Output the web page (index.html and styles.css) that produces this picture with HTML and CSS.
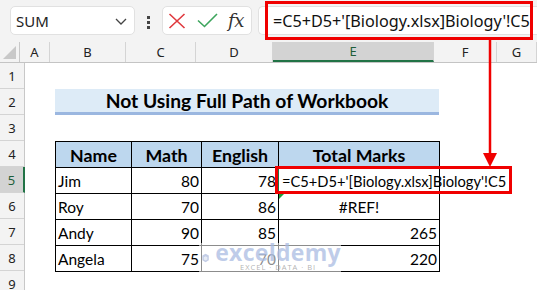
FILE: index.html
```html
<!DOCTYPE html>
<html>
<head>
<meta charset="utf-8">
<link rel="stylesheet" href="styles.css">
</head>
<body>
<div class="app">
  <div class="fbar">
    <div class="namebox"><span>SUM</span>
      <svg class="chev" width="12" height="7" viewBox="0 0 12 7"><path d="M1 1 L6 6 L11 1" fill="none" stroke="#444" stroke-width="1.3"/></svg>
    </div>
    <div class="dots"><i></i><i></i><i></i></div>
    <div class="fxbox">
      <svg class="ic" width="18" height="16" viewBox="0 0 18 16"><path d="M1.5 1 L16.5 15 M16.5 1 L1.5 15" stroke="#e0393e" stroke-width="1.6" fill="none"/></svg>
      <svg class="ic" width="21" height="15" viewBox="0 0 21 15"><path d="M1 7.5 L7.5 13.5 L20 1" stroke="#3da55d" stroke-width="1.6" fill="none"/></svg>
      <span class="fx">fx</span>
    </div>
    <div class="finput">=C5+D5+'[Biology.xlsx]Biology'!C5</div>
  </div>
  <div class="colheads">
    <div class="corner"><svg width="13" height="13" viewBox="0 0 13 13"><path d="M13 0 L13 13 L0 13 Z" fill="#c8c8c8"/></svg></div>
    <div class="ch wA">A</div>
    <div class="ch wB">B</div>
    <div class="ch wC">C</div>
    <div class="ch wD">D</div>
    <div class="ch wE sel">E</div>
    <div class="ch wF">F</div>
    <div class="ch wG">G</div>
  </div>
  <div class="body">
    <div class="rowheads">
      <div class="rh">1</div><div class="rh">2</div><div class="rh">3</div><div class="rh">4</div>
      <div class="rh sel">5</div><div class="rh">6</div><div class="rh">7</div><div class="rh">8</div><div class="rh">9</div>
    </div>
    <div class="sheet">
      <div class="spacer"></div>
      <div class="title">Not Using Full Path of Workbook</div>
      <div class="spacer"></div>
      <div class="tbl">
        <div class="th">Name</div><div class="th">Math</div><div class="th">English</div><div class="th">Total Marks</div>
        <div class="td">Jim</div><div class="td num">80</div><div class="td num">78</div><div class="td active"><span class="ftext">=C5+D5+'[Biology.xlsx]Biology'!C5</span></div>
        <div class="td">Roy</div><div class="td num">70</div><div class="td num">86</div><div class="td ctr err">#REF!</div>
        <div class="td">Andy</div><div class="td num">90</div><div class="td num">85</div><div class="td num">265</div>
        <div class="td">Angela</div><div class="td num">75</div><div class="td num">70</div><div class="td num">220</div>
      </div>
    </div>
  </div>

  <div class="redbox-bar"></div>
  <svg class="arrow" width="20" height="130" viewBox="0 0 20 130"><path d="M10 0 L10 114" stroke="#f00000" stroke-width="2.5"/><path d="M3 113 L17 113 L10 127 Z" fill="#f00000"/></svg>
  <div class="redbox-cell"></div>
  <div class="watermark">
    <svg class="wm-logo" width="20" height="26" viewBox="0 0 20 26"><path d="M10 1 L19 6 L19 19 L10 25 L1 19 L1 6 Z" fill="#c3cde6"/><path d="M10 8 L15 11 L15 17 L10 20 L5 17 L5 11 Z" fill="#e6ebf5"/></svg>
    <div class="wm-text"><div class="wm-big">exceldemy</div><div class="wm-small">EXCEL · DATA · BI</div></div>
  </div>
</div>
</body>
</html>
```
FILE: styles.css
```css
html, body { margin: 0; padding: 0; }
body { width: 537px; height: 290px; overflow: hidden; background: #fff; }
.app { position: relative; width: 537px; height: 290px; overflow: hidden; font-family: "Noto Sans", sans-serif; }

.fbar { height: 42px; background: #f3f3f3; display: flex; align-items: flex-start; padding: 6px 0 0 10px; box-sizing: border-box; }
.namebox { width: 125px; height: 29px; box-sizing: border-box; background: #fff; border: 1px solid #e1e1e1; border-radius: 5px; display: flex; align-items: center; justify-content: space-between; padding: 0 7px 0 5px; font-size: 15px; color: #222; }
.chev { margin-top: 1px; }
.dots { width: 27px; display: flex; flex-direction: column; align-items: center; gap: 2px; padding-top: 10px; }
.dots i { display: block; width: 3px; height: 3px; background: #444; }
.fxbox { width: 90px; height: 29px; box-sizing: border-box; background: #fff; border: 1px solid #e1e1e1; border-radius: 5px; display: flex; align-items: center; padding: 0 6px 0 5px; gap: 11px; }
.fx { font-family: "DejaVu Serif", "Liberation Serif", serif; font-style: italic; font-size: 18px; color: #333; margin-left: -1px; letter-spacing: -0.5px; }
.finput { margin-left: 6px; flex: 1; height: 29px; box-sizing: border-box; background: #fff; border: 1px solid #e1e1e1; border-right: none; border-radius: 5px 0 0 5px; font-size: 16.2px; color: #111; display: flex; align-items: center; padding-left: 14px; white-space: nowrap; }

.colheads { height: 21px; display: flex; background: #f3f3f3; border-bottom: 1px solid #c4c4c4; box-sizing: border-box; }
.corner { width: 25px; box-sizing: border-box; border-right: 1px solid #c8c8c8; display: flex; align-items: flex-end; justify-content: flex-end; padding: 0 3px 3px 0; }
.ch { box-sizing: border-box; border-right: 1px solid #d4d4d4; font-size: 13px; color: #222; text-align: center; line-height: 20px; flex: none; }
.ch.sel { background: #d3d3d3; border-bottom: 2px solid #217346; color: #1e5e3a; line-height: 19px; }
.wA { width: 30px; } .wB { width: 76px; } .wC { width: 70px; } .wD { width: 77px; } .wE { width: 161px; } .wF { width: 63px; } .wG { width: 40px; }

.body { display: flex; }
.rowheads { width: 25px; flex: none; background: #f3f3f3; border-right: 1px solid #c8c8c8; box-sizing: border-box; }
.rh { height: 26px; box-sizing: border-box; border-bottom: 1px solid #d4d4d4; font-size: 13px; color: #222; text-align: center; line-height: 26px; }
.rh.sel { background: #d3d3d3; border-right: 2px solid #217346; margin-right: -1px; color: #1e5e3a; }

.sheet { flex: 1; padding-left: 30px; font-family: Lato, "Liberation Sans", sans-serif; color: #000; }
.spacer { height: 26px; }
.title { width: 384px; height: 26px; box-sizing: border-box; background: #ddebf7; border-bottom: 3px solid #9bb7e0; text-align: center; font-weight: 700; font-size: 19.3px; line-height: 24px; }
.tbl { width: 385px; display: grid; grid-template-columns: 75px 69px 76px 160px; grid-auto-rows: 25px; gap: 1px; padding: 1px; background: #000; box-sizing: border-box; }
.th { background: #bdd7ee; font-weight: 700; font-size: 17.8px; text-align: center; line-height: 26px; }
.td { background: #fff; font-size: 15.5px; line-height: 26px; padding: 0 2px; white-space: nowrap; }
.td.num { text-align: right; }
.td.ctr { text-align: center; }
.td.active { position: relative; box-shadow: -1px -1px 0 1px #217346; padding-left: 3px; overflow: visible; z-index: 1; }
.ftext { font-size: 14.7px; }
.td.err { position: relative; }
.td.err::before { content: ""; position: absolute; left: 0; top: 0; border-top: 5px solid #1f9d3a; border-right: 5px solid transparent; }

.redbox-bar { position: absolute; left: 265px; top: 1px; width: 268px; height: 39px; box-sizing: border-box; border: 3.5px solid #f00000; }
.arrow { position: absolute; left: 480px; top: 40px; }
.redbox-cell { position: absolute; left: 275px; top: 166px; width: 237px; height: 28px; box-sizing: border-box; border: 3px solid #f00000; z-index: 3; }
.watermark { position: absolute; left: 199px; top: 243px; width: 142px; height: 29px; background: rgba(255,255,255,0.55); display: flex; align-items: center; gap: 6px; padding-left: 3px; box-sizing: border-box; z-index: 2; }
.wm-text { display: flex; flex-direction: column; align-items: center; line-height: 1; }
.wm-big { font-family: "Open Sans", sans-serif; font-weight: 700; font-size: 23px; color: rgba(170,188,226,0.75); letter-spacing: 0.3px; margin-top: -3px; }
.wm-small { font-family: "Open Sans", sans-serif; font-size: 7.5px; color: rgba(160,160,160,0.8); letter-spacing: 1px; margin-top: 0px; }
```
